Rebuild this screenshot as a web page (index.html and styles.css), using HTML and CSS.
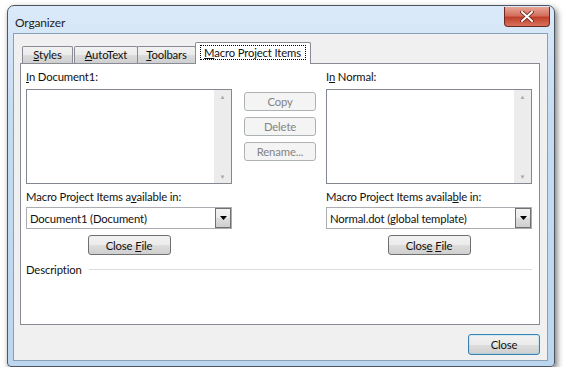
FILE: index.html
```html
<!DOCTYPE html>
<html>

<head>
    <meta charset="UTF-8" />
    <title>Organizer</title>
    <link rel="stylesheet" href="styles.css">
</head>

<body>
    <div class="window">
        <div class="titlebar">
            <span class="title">Organizer</span>
            <div class="close-x">
                <svg width="14" height="11" viewBox="0 0 14 11">
                    <path d="M2 1 L12 10 M12 1 L2 10" stroke="#6b1d16" stroke-width="3.6" stroke-linecap="round" />
                    <path d="M2 1 L12 10 M12 1 L2 10" stroke="#fff" stroke-width="2" stroke-linecap="round" />
                </svg>
            </div>
        </div>

        <div class="client">
            <div class="tabs">
                <div class="tab t1"><u>S</u>tyles</div>
                <div class="tab t2"><u>A</u>utoText</div>
                <div class="tab t3"><u>T</u>oolbars</div>
                <div class="tab active"><span class="focus"><u>M</u>acro Project Items</span></div>
            </div>

            <div class="panel">
                <div class="columns">
                    <div class="col">
                        <label><u>I</u>n Document1:</label>
                        <div class="listbox">
                            <div class="scroll">
                                <span class="arrow">&#9650;</span>
                                <span class="arrow">&#9660;</span>
                            </div>
                        </div>
                        <label class="sub">Macro Project Items a<u>v</u>ailable in:</label>
                        <div class="combo">
                            <span>Document1 (Document)</span>
                            <div class="drop"><svg width="7" height="4" viewBox="0 0 7 4"><path d="M0 0 H7 L3.5 4 Z" fill="#000" /></svg></div>
                        </div>
                        <button class="btn file">Close <u>F</u>ile</button>
                    </div>

                    <div class="middle">
                        <button class="btn off">Copy</button>
                        <button class="btn off">Delete</button>
                        <button class="btn off">Rename...</button>
                    </div>

                    <div class="col">
                        <label>I<u>n</u> Normal:</label>
                        <div class="listbox">
                            <div class="scroll">
                                <span class="arrow">&#9650;</span>
                                <span class="arrow">&#9660;</span>
                            </div>
                        </div>
                        <label class="sub">Macro Project Items availa<u>b</u>le in:</label>
                        <div class="combo">
                            <span>Normal.dot (global template)</span>
                            <div class="drop"><svg width="7" height="4" viewBox="0 0 7 4"><path d="M0 0 H7 L3.5 4 Z" fill="#000" /></svg></div>
                        </div>
                        <button class="btn file">Clos<u>e</u> <u>F</u>ile</button>
                    </div>
                </div>

                <div class="desc">
                    <span>Description</span>
                    <div class="rule"></div>
                </div>
            </div>

            <div class="footer">
                <button class="btn default">Close</button>
            </div>
        </div>
    </div>
</body>

</html>
```

FILE: styles.css
```css
body {
    margin: 0;
    background: #ffffff;
    font-family: Lato, "Noto Sans", sans-serif;
    font-size: 11.3px;
    letter-spacing: -0.15px;
    color: #111;
}

u {
    text-decoration: underline;
    text-underline-offset: 1px;
}

.window {
    margin: 5px 0 0 7px;
    width: 546px;
    height: 360px;
    border: 1px solid #4c5560;
    border-radius: 7px 7px 4px 4px;
    background: linear-gradient(180deg, #dbeafa 0%, #c5dcf2 30%, #bcd6f0 100%);
    box-shadow: 2px 3px 6px rgba(0, 0, 0, 0.55);
    display: flex;
    flex-direction: column;
}

.titlebar {
    height: 27px;
    display: flex;
    justify-content: space-between;
    align-items: flex-start;
}

.title {
    margin: 9px 0 0 7px;
    font-size: 12px;
    color: #1e1e1e;
}

.close-x {
    width: 44px;
    height: 19px;
    margin: 1px 4px 0 0;
    border: 1px solid #6a2a24;
    border-top: none;
    border-radius: 0 0 4px 4px;
    background: linear-gradient(180deg, #e8a596 0%, #d2705d 45%, #c0412b 55%, #d8725b 100%);
    display: flex;
    align-items: center;
    justify-content: center;
}

.client {
    flex: 1;
    margin: 0 6px 5px 5px;
    border: 1px solid #8ba0b8;
    background: #f0f0f0;
    display: flex;
    flex-direction: column;
}

.tabs {
    display: flex;
    margin: 11px 0 0 8px;
    height: 18px;
    align-items: flex-end;
    position: relative;
    z-index: 1;
}

.tab {
    height: 16px;
    border: 1px solid #898c95;
    border-bottom: none;
    border-radius: 2px 2px 0 0;
    background: linear-gradient(180deg, #f2f2f2 0%, #ebebeb 50%, #dcdcdc 51%, #cfcfcf 100%);
    line-height: 16px;
    text-align: center;
    box-sizing: border-box;
    height: 17px;
}

.t1 {
    width: 51px;
    margin-right: 1px;
}

.t2 {
    width: 64px;
}

.t3 {
    width: 59px;
    margin-left: -1px;
}

.tab.active {
    width: 116px;
    height: 22px;
    margin: 0 0 -1px -1px;
    background: #ffffff;
    line-height: 20px;
}

.focus {
    border: 1px dotted #000;
    padding: 0 4px 0 3px;
}

.panel {
    margin: 0 7px 0 6px;
    height: 262px;
    border: 1px solid #898c95;
    background: #ffffff;
    padding: 5px 7px 0 5px;
    box-sizing: border-box;
}

.columns {
    display: flex;
}

.col {
    width: 206px;
    display: flex;
    flex-direction: column;
}

label {
    height: 16px;
    line-height: 16px;
    margin-bottom: 4px;
    display: block;
}

.listbox {
    height: 95px;
    border: 1px solid #828790;
    background: #fff;
    display: flex;
    justify-content: flex-end;
    box-sizing: border-box;
}

.scroll {
    width: 17px;
    background: #ececec;
    display: flex;
    flex-direction: column;
    justify-content: space-between;
    align-items: center;
    padding: 3px 0 2px;
}

.arrow {
    font-size: 6px;
    color: #a8a8a8;
    line-height: 8px;
}

.sub {
    margin-top: 5px;
    margin-bottom: 2px;
}

.combo {
    height: 22px;
    border: 1px solid #abadb3;
    box-sizing: border-box;
    display: flex;
    align-items: center;
    justify-content: space-between;
    padding-left: 3px;
}

.drop {
    width: 16px;
    height: 20px;
    box-sizing: border-box;
    border: 1px solid #707070;
    background: linear-gradient(180deg, #f2f2f2 0%, #ebebeb 50%, #dddddd 51%, #cfcfcf 100%);
    display: flex;
    align-items: center;
    justify-content: center;
}

.btn {
    font-family: inherit;
    font-size: 11.3px;
    letter-spacing: -0.15px;
    color: #111;
    border: 1px solid #707070;
    border-radius: 3px;
    background: linear-gradient(180deg, #f2f2f2 0%, #ebebeb 50%, #dddddd 51%, #cfcfcf 100%);
    padding: 0;
    height: 20px;
    line-height: 17px;
}

.file {
    width: 83px;
    margin: 6px auto 0;
}

.middle {
    width: 72px;
    margin: 23px 10px 0 12px;
    display: flex;
    flex-direction: column;
    gap: 6px;
}

.off {
    height: 19px;
    border-color: #adb2b5;
    background: #f4f4f4;
    color: #838383;
}

.desc {
    display: flex;
    align-items: center;
    margin-top: 7px;
    height: 14px;
}

.rule {
    flex: 1;
    height: 1px;
    background: #dcdcdc;
    margin-left: 7px;
}

.footer {
    display: flex;
    justify-content: flex-end;
    padding: 9px 7px 0 0;
}

.default {
    width: 72px;
    height: 21px;
    border-color: #3c7fb1;
    box-shadow: inset 0 0 0 1px #48d1ff33;
}
```
